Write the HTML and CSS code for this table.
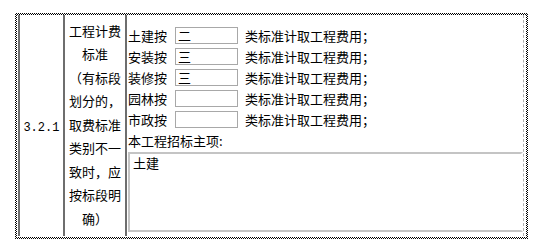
FILE: index.html
```html
<!DOCTYPE html>
<html lang="zh">
<head>
<meta charset="utf-8">
<link rel="stylesheet" href="styles.css">
</head>
<body>
<div class="frame">
  <div class="inner">
    <table class="spec">
      <tr>
        <td class="num">3.2.1</td>
        <td class="label">工程计费<br>标准<br>（有标段<br>划分的，<br>取费标准<br>类别不一<br>致时，应<br>按标段明<br>确）</td>
        <td class="content">
          <div class="row"><span class="k">土建按</span><input class="fld" value="二"><span class="t">类标准计取工程费用；</span></div>
          <div class="row"><span class="k">安装按</span><input class="fld" value="三"><span class="t">类标准计取工程费用；</span></div>
          <div class="row"><span class="k">装修按</span><input class="fld" value="三"><span class="t">类标准计取工程费用；</span></div>
          <div class="row"><span class="k">园林按</span><input class="fld" value=""><span class="t">类标准计取工程费用；</span></div>
          <div class="row"><span class="k">市政按</span><input class="fld" value=""><span class="t">类标准计取工程费用；</span></div>
          <div class="row">本工程招标主项:</div>
          <textarea class="area">土建</textarea>
        </td>
      </tr>
    </table>
  </div>
</div>
</body>
</html>
```
FILE: styles.css
```css
html, body {
  margin: 0;
  padding: 0;
  background: #fff;
}
body {
  font-family: "Noto Sans CJK SC", "Noto Sans", sans-serif;
  font-size: 13px;
  color: #000;
}
.frame {
  margin: 13px 0 0 15px;
  width: 509px;
  height: 222px;
  padding: 2px;
  background: repeating-conic-gradient(#000 0 25%, #fff 0 50%) 0 0 / 2px 2px;
}
.inner {
  width: 100%;
  height: 100%;
  background: #fff;
}
.spec {
  border-collapse: collapse;
  margin-left: 1px;
  width: 506px;
  height: 221px;
  border-left: 2px solid #6e6e6e;
  border-right: 1px dashed #b0b0b0;
}
.spec td {
  padding: 0;
  vertical-align: middle;
}
.num {
  width: 43px;
  border-right: 2px solid #6e6e6e;
  text-align: center;
  font-family: "Liberation Mono", monospace;
  font-size: 12px;
  padding-top: 4px !important;
}
.label {
  width: 61px;
  border-right: 2px solid #6e6e6e;
  text-align: center;
  line-height: 23.5px;
  padding-bottom: 2px !important;
}
.content {
  vertical-align: top;
  padding: 6px 0 0 1px !important;
}
.row {
  display: flex;
  align-items: center;
  height: 21px;
  line-height: 21px;
  white-space: nowrap;
}
.k {
  width: 47px;
}
.fld {
  box-sizing: border-box;
  width: 63px;
  height: 17px;
  margin: 0 7px 0 0;
  padding: 0 2px;
  border: 1px solid #a8a8a8;
  font: 13px "Noto Sans CJK SC", sans-serif;
  line-height: 15px;
  color: #000;
  background: #fff;
  outline: none;
}
.area {
  display: block;
  box-sizing: border-box;
  width: 395px;
  height: 80px;
  margin-top: 1px;
  padding: 1px 3px;
  border: 2px solid #c4c4c4;
  border-right-color: #fff;
  font: 13px "Noto Sans CJK SC", sans-serif;
  line-height: 16px;
  resize: none;
  color: #000;
  background: #fff;
}
```
